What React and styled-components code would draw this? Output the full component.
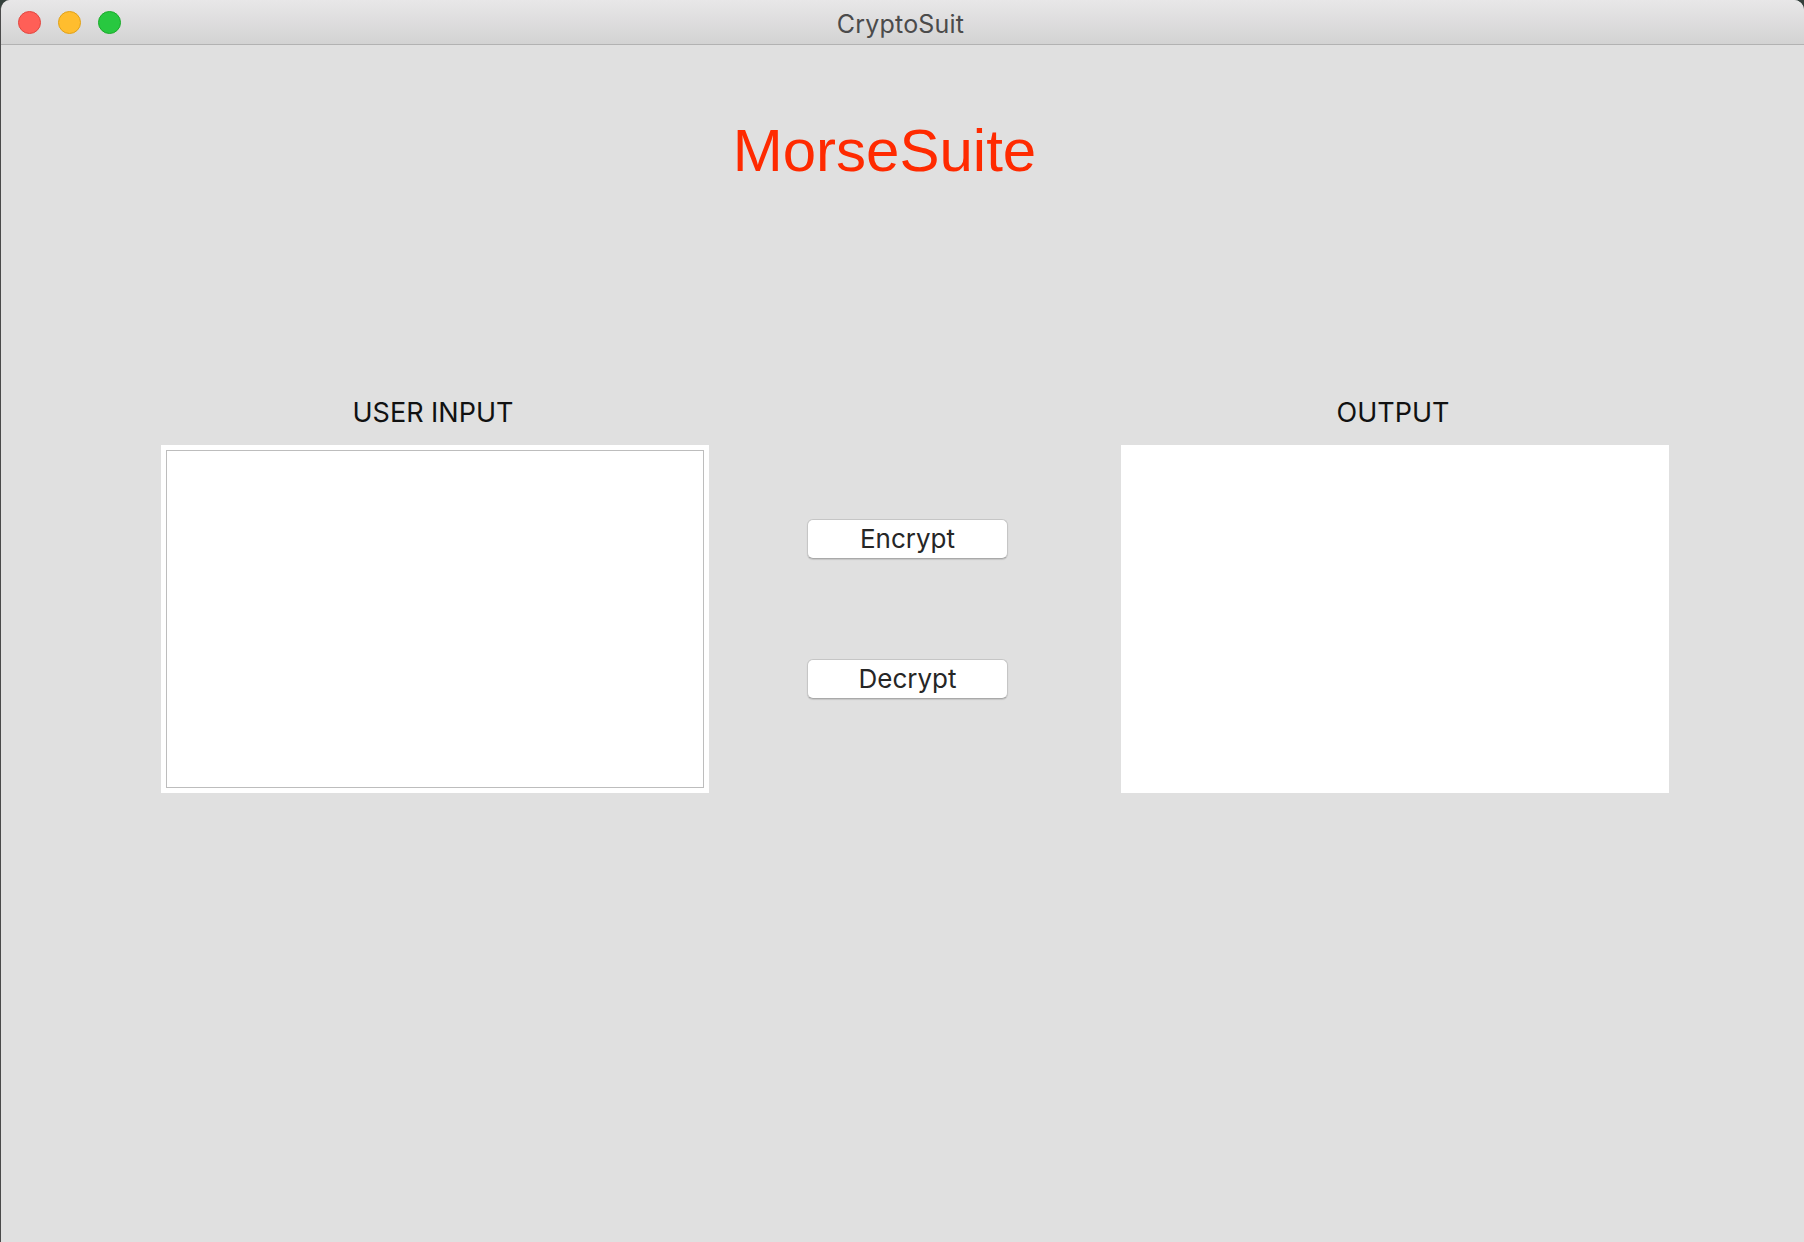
import React from "react";
import styled, { createGlobalStyle } from "styled-components";

const GlobalStyle = createGlobalStyle`
  html, body {
    margin: 0;
    padding: 0;
    background: #34403c;
  }
  * {
    box-sizing: border-box;
  }
`;

const Window = styled.div`
  width: 1804px;
  height: 1242px;
  background: #e0e0e0;
  border-radius: 10px 10px 0 0;
  overflow: hidden;
  border-left: 1px solid #4a4a4a;
  display: flex;
  flex-direction: column;
`;

const TitleBar = styled.div`
  position: relative;
  height: 45px;
  flex: none;
  background: linear-gradient(#e8e7e8, #d3d3d3);
  border-bottom: 1px solid #b2b2b2;
  display: flex;
  align-items: center;
  justify-content: center;
  padding-top: 3px;
`;

const Lights = styled.div`
  position: absolute;
  left: 17px;
  top: 11px;
  display: flex;
  gap: 17px;
`;

const Light = styled.span`
  width: 23px;
  height: 23px;
  border-radius: 50%;
  background: ${(p) => p.$fill};
  border: 1px solid ${(p) => p.$edge};
`;

const WindowTitle = styled.span`
  font-family: Inter, "Liberation Sans", sans-serif;
  font-size: 25px;
  color: #4b4b4b;
  letter-spacing: 0.2px;
  padding-right: 4px;
`;

const Content = styled.main`
  flex: 1;
  padding-top: 76px;
  display: flex;
  flex-direction: column;
`;

const Heading = styled.h1`
  margin: 0;
  padding-right: 36px;
  text-align: center;
  font-family: "Liberation Sans", Arial, sans-serif;
  font-weight: 400;
  font-size: 60px;
  line-height: 60px;
  color: #ff2a00;
`;

const Row = styled.div`
  display: flex;
  align-items: flex-start;
  margin-top: 218px;
  padding-left: 160px;
`;

const Column = styled.section`
  width: 548px;
  margin-left: ${(p) => p.$offset || 0}px;
  display: flex;
  flex-direction: column;
  align-items: center;
  gap: 19px;
`;

const Label = styled.div`
  font-family: Inter, "Liberation Sans", sans-serif;
  font-size: 27px;
  line-height: 27px;
  color: #111;
  padding-right: 4px;
`;

const TextBox = styled.div`
  width: 100%;
  height: 348px;
  background: #fff;
  padding: 5px;
`;

const TextArea = styled.textarea`
  display: block;
  width: 100%;
  height: 100%;
  margin: 0;
  border: 1px solid #bdbdbd;
  resize: none;
  outline: none;
  font-family: Inter, sans-serif;
  font-size: 20px;
  background: #fff;
`;

const OutputArea = styled.div`
  width: 100%;
  height: 348px;
  background: #fff;
`;

const Actions = styled.div`
  width: 201px;
  margin-left: 98px;
  padding-top: 120px;
  display: flex;
  flex-direction: column;
  gap: 100px;
`;

const Button = styled.button`
  height: 40px;
  width: 100%;
  padding: 0;
  background: #fff;
  border: 1px solid #c6c6c6;
  border-bottom-color: #a9a9a9;
  border-radius: 6px;
  box-shadow: 0 1px 1px rgba(0, 0, 0, 0.12);
  font-family: Inter, "Liberation Sans", sans-serif;
  font-size: 26px;
  line-height: 38px;
  color: #262626;
`;

export default function App() {
  return (
    <>
      <GlobalStyle />
      <Window>
        <TitleBar>
          <Lights>
            <Light $fill="#ff5f57" $edge="#e2463f" />
            <Light $fill="#ffbd2e" $edge="#e1a116" />
            <Light $fill="#28c840" $edge="#1aab29" />
          </Lights>
          <WindowTitle>CryptoSuit</WindowTitle>
        </TitleBar>
        <Content>
          <Heading>MorseSuite</Heading>
          <Row>
            <Column>
              <Label>USER INPUT</Label>
              <TextBox>
                <TextArea />
              </TextBox>
            </Column>
            <Actions>
              <Button>Encrypt</Button>
              <Button>Decrypt</Button>
            </Actions>
            <Column $offset={113}>
              <Label>OUTPUT</Label>
              <OutputArea />
            </Column>
          </Row>
        </Content>
      </Window>
    </>
  );
}
